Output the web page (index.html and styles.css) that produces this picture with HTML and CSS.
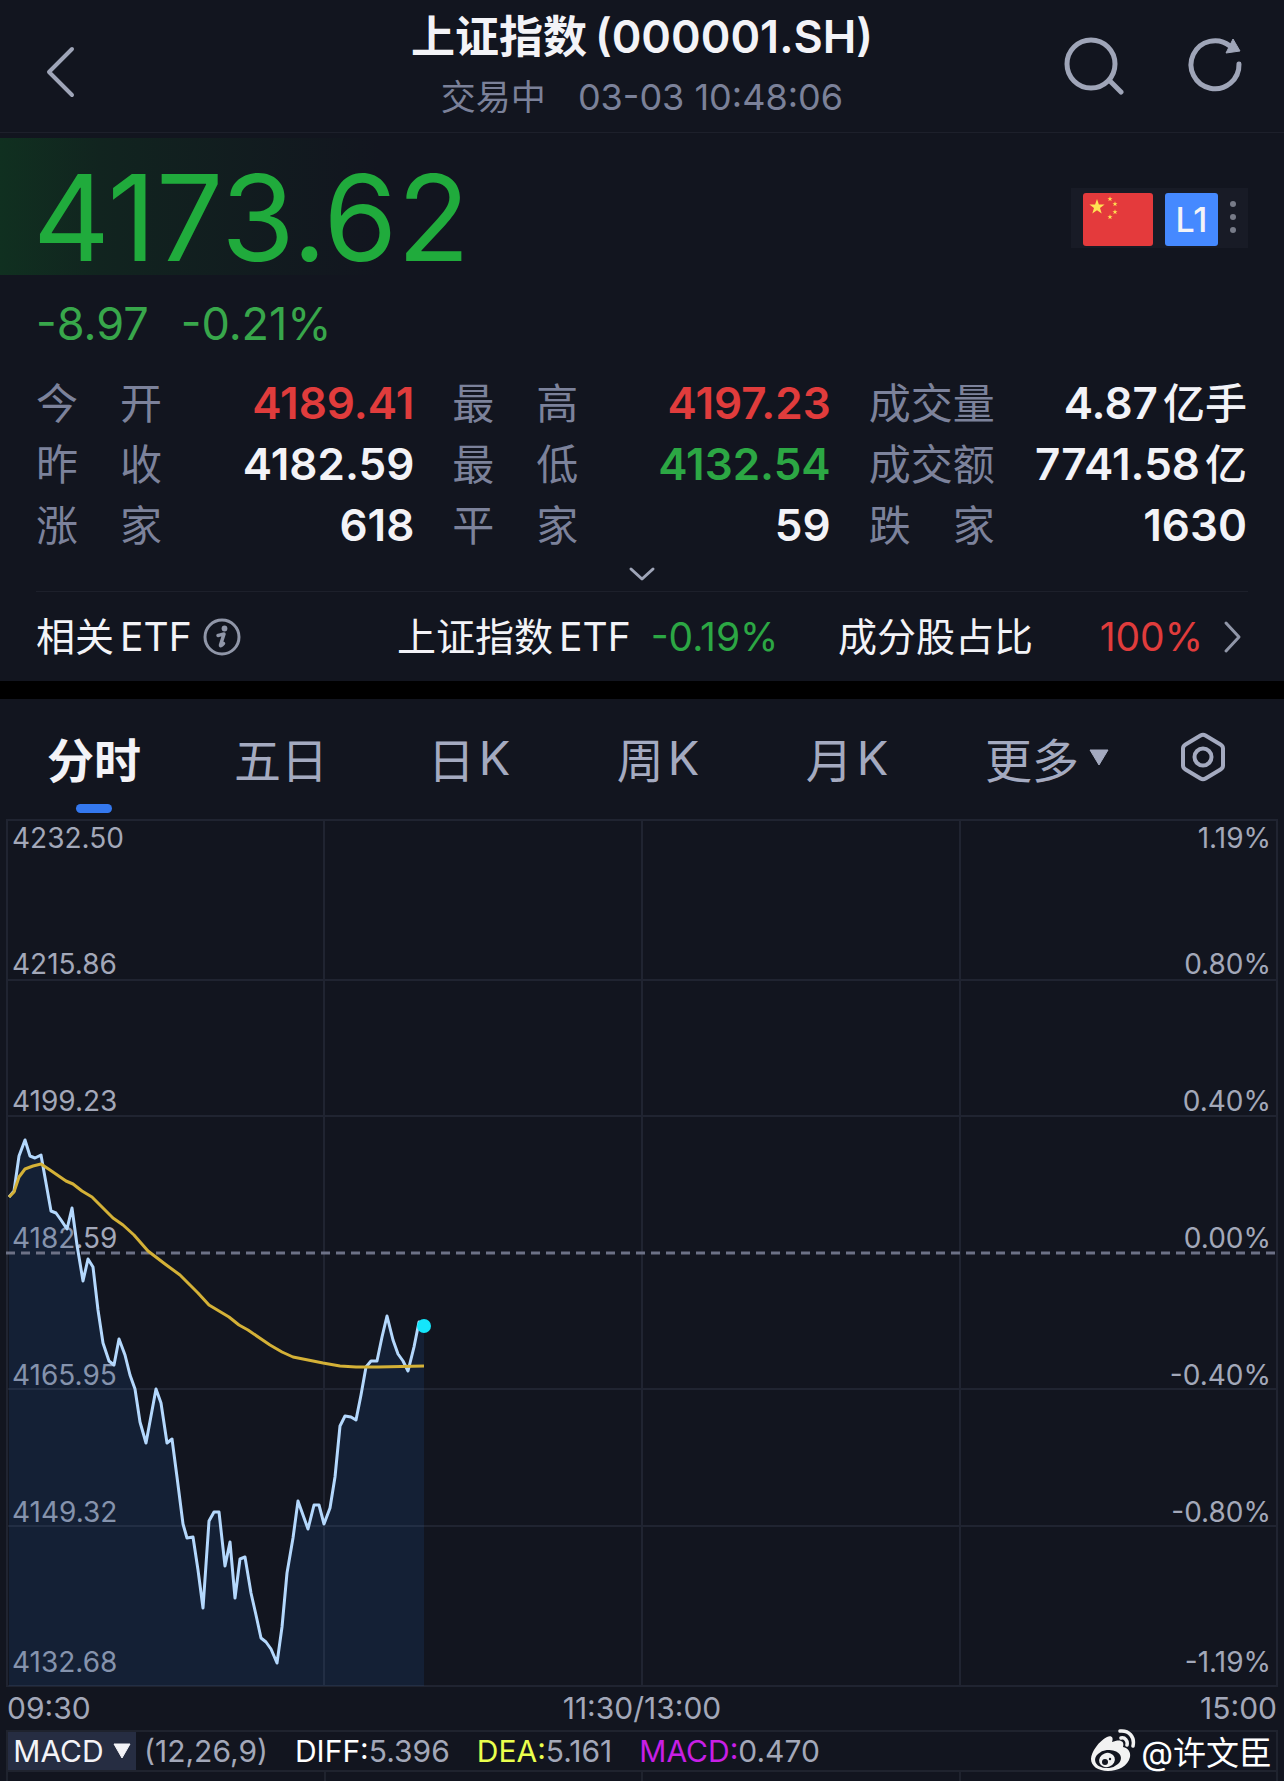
FILE: index.html
```html
<!DOCTYPE html>
<html lang="zh-CN">
<head>
<meta charset="utf-8">
<meta name="viewport" content="width=device-width, initial-scale=1">
<title>上证指数 (000001.SH)</title>
<link rel="stylesheet" href="styles.css">
</head>
<body>
<header class="topbar">
  <button class="icon-btn back" aria-label="返回">
    <svg width="32" height="54" viewBox="0 0 32 54"><path d="M28 4 5 27l23 23" fill="none" stroke="currentColor" stroke-width="4" stroke-linecap="round" stroke-linejoin="round"/></svg>
  </button>
  <div class="heading">
    <h1 class="title"><span>上证指数</span><span class="code">(000001.SH)</span></h1>
    <p class="subtitle"><span>交易中</span><span class="clock">03-03 10:48:06</span></p>
  </div>
  <div class="actions">
    <button class="icon-btn" aria-label="搜索">
      <svg width="64" height="64" viewBox="0 0 64 64" fill="none" stroke="currentColor" stroke-width="5" stroke-linecap="round"><circle cx="31" cy="31" r="24"/><path d="m50 48 11 11"/></svg>
    </button>
    <button class="icon-btn" aria-label="刷新">
      <svg width="64" height="64" viewBox="0 0 64 64"><path d="M57 31A24 24 0 1 1 48 13" fill="none" stroke="currentColor" stroke-width="5" stroke-linecap="round"/><path d="m51 6 7 12-14 2z" fill="currentColor" stroke="currentColor" stroke-linejoin="round"/></svg>
    </button>
  </div>
</header>

<main>
<section class="quote">
  <div class="hero">
    <div class="price">4173.62</div>
    <div class="badges">
      <svg class="flag" width="70" height="53" viewBox="0 0 70 53" role="img" aria-label="中国">
        <defs><path id="star" d="M0-8 1.9-2.5 7.6-2.5 3 1 4.7 6.5 0 3.2-4.7 6.5-3 1-7.6-2.5-1.9-2.5z"/></defs>
        <rect width="70" height="53" rx="3" fill="#e43a3c"/>
        <g fill="#ffe252"><use href="#star" x="14" y="14"/><use href="#star" transform="translate(27 6) scale(.34)"/><use href="#star" transform="translate(32 11) scale(.34)"/><use href="#star" transform="translate(32 19) scale(.34)"/><use href="#star" transform="translate(27 24) scale(.34)"/></g>
      </svg>
      <span class="level">L1</span>
      <svg width="6" height="40" viewBox="0 0 6 40" fill="#777b88"><circle cx="3" cy="4" r="3"/><circle cx="3" cy="17" r="3"/><circle cx="3" cy="30" r="3"/></svg>
    </div>
  </div>
  <div class="change"><span>-8.97</span><span>-0.21%</span></div>

  <dl class="stats">
    <div class="stat"><dt><span>今</span><span>开</span></dt><dd class="up">4189.41</dd></div>
    <div class="stat"><dt><span>最</span><span>高</span></dt><dd class="up">4197.23</dd></div>
    <div class="stat"><dt>成交量</dt><dd><span>4.87</span><span class="unit">亿手</span></dd></div>
    <div class="stat"><dt><span>昨</span><span>收</span></dt><dd>4182.59</dd></div>
    <div class="stat"><dt><span>最</span><span>低</span></dt><dd class="down">4132.54</dd></div>
    <div class="stat"><dt>成交额</dt><dd><span>7741.58</span><span class="unit">亿</span></dd></div>
    <div class="stat"><dt><span>涨</span><span>家</span></dt><dd>618</dd></div>
    <div class="stat"><dt><span>平</span><span>家</span></dt><dd>59</dd></div>
    <div class="stat"><dt><span>跌</span><span>家</span></dt><dd>1630</dd></div>
  </dl>
  <button class="expand" aria-label="展开">
    <svg width="28" height="16" viewBox="0 0 28 16"><path d="m3 3 11 10L25 3" fill="none" stroke="currentColor" stroke-width="3" stroke-linecap="round" stroke-linejoin="round"/></svg>
  </button>

  <div class="etf">
    <div class="etf-cell"><span class="mixed"><span>相关</span><span>ETF</span></span>
      <svg class="info" width="38" height="38" viewBox="0 0 38 38"><circle cx="19" cy="19" r="17" fill="none" stroke="currentColor" stroke-width="3"/><circle cx="21.500" cy="10.500" r="2.900" fill="currentColor"/><path d="M15 17.500c3-.6 4.500-1.500 6-1.500l-3.500 11c-.3 1.500 1.500.5 3-1.500" fill="none" stroke="currentColor" stroke-width="3.500" stroke-linecap="round" stroke-linejoin="round"/></svg>
    </div>
    <div class="etf-cell"><span class="mixed"><span>上证指数</span><span>ETF</span></span><span class="down">-0.19%</span></div>
    <a class="etf-cell share" href="#"><span>成分股占比</span><span class="up ratio">100%</span>
      <svg class="more" width="20" height="34" viewBox="0 0 20 34"><path d="m3 3 13 14L3 31" fill="none" stroke="currentColor" stroke-width="3" stroke-linecap="round" stroke-linejoin="round"/></svg>
    </a>
  </div>
</section>

<section class="chart-panel">
  <nav class="tabs">
    <button class="tab active">分时</button>
    <button class="tab">五日</button>
    <button class="tab mixed"><span>日</span><span>K</span></button>
    <button class="tab mixed"><span>周</span><span>K</span></button>
    <button class="tab mixed"><span>月</span><span>K</span></button>
    <button class="tab drop">更多<svg width="20" height="18" viewBox="0 0 20 18"><path d="M1 2h18l-9 15z" fill="currentColor" stroke="currentColor" stroke-linejoin="round"/></svg></button>
    <button class="tab" aria-label="设置"><svg width="46" height="50" viewBox="0 0 46 50" fill="none" stroke="currentColor" stroke-width="4" stroke-linejoin="round"><path d="M20.500 3.500q2.500-1.500 5 0l15 9q2.500 1.500 2.500 4v17q0 2.500-2.500 4l-15 9q-2.500 1.500-5 0l-15-9Q3 36 3 33.500v-17q0-2.500 2.500-4z"/><circle cx="23" cy="25" r="8.500"/></svg></button>
  </nav>

  <div class="chart">
    <div class="axis">
      <div class="band first"><span>4232.50</span><span>1.19%</span><span>4215.86</span><span>0.80%</span></div>
      <div class="band"><span>4199.23</span><span>0.40%</span></div>
      <div class="band"><span>4182.59</span><span>0.00%</span></div>
      <div class="band"><span>4165.95</span><span>-0.40%</span></div>
      <div class="band"><span>4149.32</span><span>-0.80%</span></div>
      <div class="band last"><span>4132.68</span><span>-1.19%</span></div>
    </div>
    <svg class="plot" viewBox="6 819 1272 868" preserveAspectRatio="none">
      <path d="M9 1197 14 1191 19 1156 25 1140 30 1156 35 1158 41 1155 46 1183 51 1211 56 1213 61 1220 67 1229 72 1208 77 1245 83 1281 88 1259 93 1267 98 1310 103 1343 109 1361 114 1365 119 1339 125 1355 130 1375 135 1389 140 1422 146 1443 151 1416 156 1389 161 1403 167 1443 172 1439 177 1477 183 1524 187 1538 193 1537 198 1570 203 1608 209 1521 214 1512 219 1512 225 1566 230 1542 235 1598 240 1559 245 1557 251 1593 256 1615 261 1638 266 1642 271 1649 277 1663 282 1627 287 1573 293 1538 298 1501 303 1515 308 1529 314 1505 319 1505 324 1524 330 1508 335 1477 340 1426 345 1416 351 1417 356 1420 361 1395 366 1367 371 1361 377 1361 382 1337 387 1316 393 1340 398 1354 403 1361 408 1371 414 1347 419 1322 424 1326V1686H9z" fill="#1c4783" fill-opacity=".22"/>
      <path class="grid" d="M7 820H1277V1686H7zM7 980H1277M7 1116H1277M7 1389H1277M7 1526H1277M324 820V1686M642 820V1686M960 820V1686"/>
      <path d="M6 1253H1277" stroke="#6c7186" stroke-width="3" stroke-dasharray="9 6"/>
      <path d="M9 1197 14 1191 19 1156 25 1140 30 1156 35 1158 41 1155 46 1183 51 1211 56 1213 61 1220 67 1229 72 1208 77 1245 83 1281 88 1259 93 1267 98 1310 103 1343 109 1361 114 1365 119 1339 125 1355 130 1375 135 1389 140 1422 146 1443 151 1416 156 1389 161 1403 167 1443 172 1439 177 1477 183 1524 187 1538 193 1537 198 1570 203 1608 209 1521 214 1512 219 1512 225 1566 230 1542 235 1598 240 1559 245 1557 251 1593 256 1615 261 1638 266 1642 271 1649 277 1663 282 1627 287 1573 293 1538 298 1501 303 1515 308 1529 314 1505 319 1505 324 1524 330 1508 335 1477 340 1426 345 1416 351 1417 356 1420 361 1395 366 1367 371 1361 377 1361 382 1337 387 1316 393 1340 398 1354 403 1361 408 1371 414 1347 419 1322 424 1326" fill="none" stroke="#b4d8fd" stroke-width="3" stroke-linejoin="round"/>
      <path d="M9 1197 14 1192 19 1177 25 1169 33 1166 41 1164 50 1170 66 1181 73 1184 82 1191 92 1197 102 1207 113 1218 123 1225 134 1235 148 1251 165 1264 180 1275 190 1285 198 1293 209 1305 219 1311 229 1317 239 1325 248 1330 270 1345 282 1352 293 1357 308 1360 323 1363 340 1366 356 1367 378 1367 424 1366" fill="none" stroke="#d4b137" stroke-width="3" stroke-linejoin="round"/>
      <circle cx="424" cy="1326" r="7" fill="#14e6fb"/>
    </svg>
  </div>
  <div class="times"><span>09:30</span><span>11:30/13:00</span><span>15:00</span></div>

  <div class="indicator">
    <button class="picker">MACD<svg width="18" height="16" viewBox="0 0 18 16"><path d="M1 1h16L9 15z" fill="currentColor" stroke="currentColor" stroke-linejoin="round"/></svg></button>
    <span class="params">(12,26,9)</span>
    <span class="reading"><b class="diff">DIFF:</b>5.396</span>
    <span class="reading"><b class="dea">DEA:</b>5.161</span>
    <span class="reading"><b class="macd">MACD:</b>0.470</span>
    <span class="credit">
      <svg width="46" height="46" viewBox="0 0 46 46">
        <path d="M17 9c4-2 7 0 5 5 7-3 13-2 11 5 5 1 8 5 7 10-2 9-12 14-22 14C8 43 1 38 1 31 1 24 9 13 17 9z" fill="#f2f2f2"/>
        <ellipse cx="18" cy="31" rx="13" ry="9" transform="rotate(-8 18 31)" fill="#12151f"/>
        <ellipse cx="17" cy="32" rx="8" ry="7" transform="rotate(-20 17 32)" fill="#f2f2f2"/>
        <circle cx="15" cy="34" r="3" fill="#12151f"/><circle cx="20" cy="31" r="1.200" fill="#12151f"/>
        <path d="M30 3c9-1 15 6 13 15M31 10c4-1 7 3 6 7" fill="none" stroke="#f2f2f2" stroke-width="3.500" stroke-linecap="round"/>
      </svg>
      <span>@许文臣</span>
    </span>
  </div>
  <div class="subchart"><i></i><i></i><i></i><i></i></div>
</section>
</main>
</body>
</html>
```
FILE: styles.css
```css
* { box-sizing: border-box; }

body {
  margin: 0;
  background: #12151f;
  color: #f3f3f7;
  font-family: Inter, "Noto Sans CJK SC", sans-serif;
}

button {
  padding: 0;
  border: 0;
  background: none;
  color: inherit;
  font: inherit;
}

svg { display: block; flex: none; }
h1, p, dl, dd { margin: 0; }

.up { color: #e03c3c; }
.down { color: #2ca744; }

.mixed { display: inline-flex; gap: 6px; }

/* Top bar */
.topbar {
  display: grid;
  grid-template-columns: 1fr auto 1fr;
  height: 133px;
  border-bottom: 1px solid #1d202b;
}
.icon-btn { color: #9fa5b8; }
.back { justify-self: start; align-self: start; margin: 45px 0 0 44px; }
.heading { text-align: center; padding-top: 7px; }
.title {
  display: flex;
  justify-content: center;
  gap: 8px;
  font-size: 44px;
  line-height: 60px;
  font-weight: 600;
}
.code { font-size: 45px; }
.subtitle {
  display: flex;
  justify-content: center;
  gap: 32px;
  font-size: 35px;
  line-height: 60px;
  color: #7b8199;
}
.clock { font-size: 36px; }
.actions {
  display: flex;
  justify-content: flex-end;
  align-items: flex-start;
  gap: 58px;
  padding: 33px 38px 0 0;
}

/* Quote */
.quote { padding-top: 5px; }
.hero {
  display: flex;
  justify-content: space-between;
  align-items: center;
  height: 137px;
  padding: 0 36px 0 33px;
  background: linear-gradient(90deg, #103020 0, #11241f 100px, #12151f 380px);
}
.price {
  font-size: 119px;
  line-height: 137px;
  padding-top: 24px;
  color: #20ab3c;
}
.badges {
  display: flex;
  align-items: center;
  gap: 12px;
  height: 60px;
  padding: 4px 12px 0;
  margin-top: 22px;
  background: #181b26;
}
.level {
  width: 53px;
  border-radius: 3px;
  background: #4589ff;
  font-size: 34px;
  line-height: 53px;
  font-weight: 500;
  text-align: center;
}
.change {
  display: flex;
  gap: 32px;
  padding: 0 36px;
  font-size: 45px;
  line-height: 98px;
  color: #38a74b;
}
.stats {
  display: grid;
  grid-template-columns: repeat(3, 1fr);
  column-gap: 38px;
  padding: 0 37px 0 36px;
  font-size: 42px;
  line-height: 61px;
}
.stat { display: flex; justify-content: space-between; }
.stat dt {
  display: flex;
  justify-content: space-between;
  width: 126px;
  color: #7c829b;
}
.stat dd { display: flex; gap: 5px; font-size: 44px; font-weight: 600; }
.unit { font-size: 42px; font-weight: 500; }
.expand {
  display: grid;
  place-items: center;
  width: 100%;
  height: 35px;
  color: #9fa5b8;
}
.etf {
  display: grid;
  grid-template-columns: 361fr 441fr 410fr;
  margin: 0 36px;
  border-top: 1px solid #1d202b;
  font-size: 39px;
  line-height: 89px;
}
.etf-cell {
  display: flex;
  align-items: center;
  gap: 20px;
  color: inherit;
  text-decoration: none;
}
.info { color: #9096a8; margin-left: -9px; }
.ratio { margin-left: auto; }
.more { color: #9096a8; margin-right: 5px; }

/* Chart */
.chart-panel { border-top: 18px solid #000; }
.tabs {
  display: grid;
  grid-template-columns: 188fr 186fr 190fr 188fr 190fr 210fr 102fr;
  padding-right: 30px;
  height: 120px;
}
.tab {
  display: flex;
  justify-content: center;
  align-items: center;
  gap: 10px;
  position: relative;
  padding-bottom: 4px;
  font-size: 47px;
  color: #a4aac0;
}
.tab.mixed { gap: 4px; }
.tab.active { color: #f3f3f7; font-weight: 600; }
.tab.active::after {
  content: "";
  position: absolute;
  left: 50%;
  bottom: 6px;
  width: 36px;
  height: 9px;
  margin-left: -18px;
  border-radius: 5px;
  background: #3478ef;
}
.chart { position: relative; margin: 0 6px; }
.plot { position: absolute; inset: 0; width: 100%; height: 100%; }
.grid { fill: none; stroke: #8c96b4; stroke-opacity: .12; stroke-width: 2; }
.axis { font-size: 28px; line-height: 30px; color: #a3a8b9; }
.band {
  display: grid;
  grid-template-columns: 1fr auto;
  align-content: space-between;
  height: 137px;
  padding: 0 7px 0 6px;
}
.band:not(.first) { align-content: end; }
.band.first { height: 160px; padding-top: 4px; }
.band.last { height: 160px; padding-bottom: 10px; }
.band span:nth-child(even) { text-align: right; }
.times {
  display: grid;
  grid-template-columns: 1fr auto 1fr;
  padding: 0 7px;
  font-size: 30px;
  line-height: 43px;
  color: #a3a8b9;
}
.times span:last-child { text-align: right; }
.indicator {
  display: flex;
  align-items: center;
  margin: 0 6px;
  height: 42px;
  border: 2px solid #1f232e;
  font-size: 30px;
  color: #a3a8b9;
  white-space: nowrap;
}
.picker {
  display: flex;
  align-items: center;
  justify-content: center;
  gap: 9px;
  width: 128px;
  align-self: stretch;
  background: #262d42;
  color: #f3f3f7;
}
.params { margin-left: 8px; }
.reading { margin-left: 27px; }
.reading b { font-weight: 400; }
.diff { color: #fff; }
.dea { color: #eaff4d; }
.macd { color: #c81fe6; }
.credit {
  display: flex;
  align-items: center;
  gap: 5px;
  margin-left: auto;
  padding-right: 4px;
  font-size: 33px;
  color: #fff;
}
.subchart {
  display: grid;
  grid-template-columns: repeat(4, 1fr);
  height: 9px;
  margin: 0 6px;
  border-left: 2px solid #1f232e;
}
.subchart i { border-right: 2px solid #1f232e; }
```
